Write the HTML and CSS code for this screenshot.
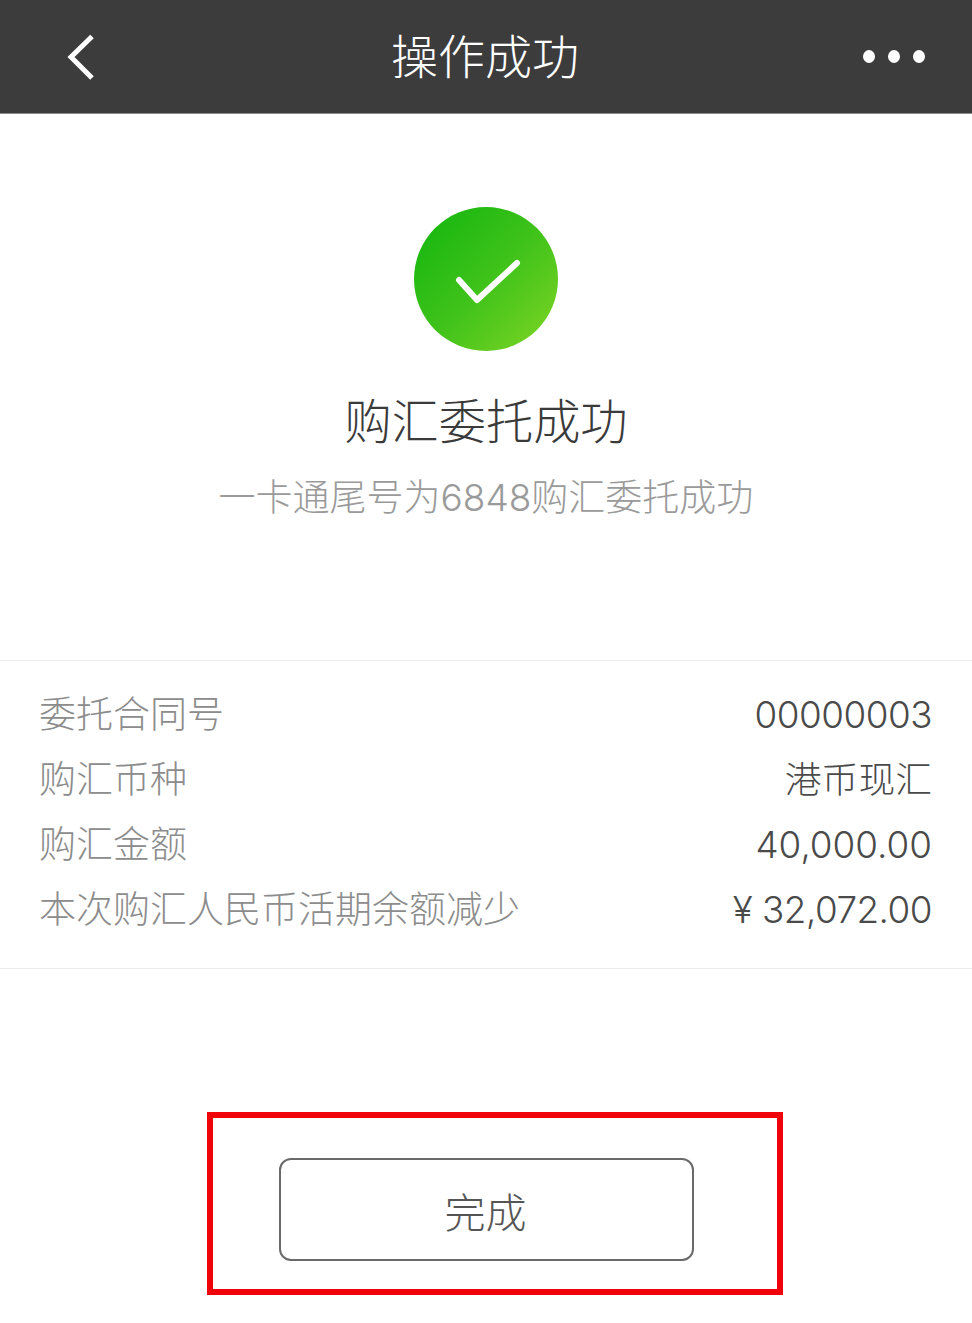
FILE: index.html
```html
<!DOCTYPE html>
<html lang="zh-CN">
<head>
    <meta charset="UTF-8">
    <meta name="viewport" content="width=device-width, initial-scale=1.0">
    <title>操作成功</title>
    <link rel="stylesheet" href="styles.css">
</head>
<body>

    <!-- Top bar -->
    <header class="topbar">
        <svg class="back" width="30" height="48" viewBox="0 0 30 48">
            <path d="M26 3.500 L5 24 L26 45" fill="none" stroke="#fff" stroke-width="5"/>
        </svg>
        <div class="topbar-title">操作成功</div>
        <div class="more"><span></span><span></span><span></span></div>
    </header>

    <!-- Result -->
    <section class="result">
        <div class="result-icon">
            <svg width="144" height="144" viewBox="0 0 144 144">
                <path d="M45 73 L63 93 L103 56" fill="none" stroke="#fff" stroke-width="6" stroke-linecap="round" stroke-linejoin="round"/>
            </svg>
        </div>
        <h1 class="result-title">购汇委托成功</h1>
        <p class="result-desc">一卡通尾号为6848购汇委托成功</p>
    </section>

    <!-- Details -->
    <section class="details">
        <div class="row"><span class="label">委托合同号</span><span class="value num">00000003</span></div>
        <div class="row"><span class="label">购汇币种</span><span class="value">港币现汇</span></div>
        <div class="row"><span class="label">购汇金额</span><span class="value">40,000.00</span></div>
        <div class="row"><span class="label">本次购汇人民币活期余额减少</span><span class="value num">¥ 32,072.00</span></div>
    </section>

    <!-- Button with red marker -->
    <div class="marker">
        <button class="done">完成</button>
    </div>

</body>
</html>
```

FILE: styles.css
```css
html, body {
    margin: 0;
    padding: 0;
}

body {
    width: 972px;
    height: 1323px;
    overflow: hidden;
    background-color: #fff;
    font-family: Inter, "Noto Sans CJK SC", sans-serif;
}

.topbar {
    height: 113px;
    background-color: #3c3c3c;
    border-bottom: 1px solid #8a8a8a;
    display: grid;
    grid-template-columns: 1fr auto 1fr;
    align-items: center;
    padding: 0 47px 0 66px;
}

.topbar-title {
    color: #fff;
    font-size: 47px;
    font-weight: 300;
    line-height: 113px;
    margin-right: 21px;
}

.more {
    display: flex;
    gap: 13px;
    justify-content: flex-end;
}

.more span {
    width: 12px;
    height: 13px;
    border-radius: 50%;
    background-color: #fff;
}

.result {
    height: 546px;
    padding-top: 93px;
    box-sizing: border-box;
    display: flex;
    flex-direction: column;
    align-items: center;
}

.result-icon {
    width: 144px;
    height: 144px;
    border-radius: 50%;
    background: linear-gradient(135deg, #10b50e 0%, #3ec21a 50%, #80d624 100%);
}

.result-title {
    margin: 37px 0 0;
    font-size: 47.200px;
    font-weight: 300;
    line-height: 68px;
    color: #3a3a3a;
}

.result-desc {
    margin: 18px 0 0;
    font-size: 37px;
    font-weight: 300;
    line-height: 48px;
    color: #9a9a9a;
}

.details {
    border-top: 1px solid #ececec;
    border-bottom: 1px solid #ececec;
    padding: 22px 40px 26px 39px;
    height: 309px;
    box-sizing: border-box;
}

.row {
    display: flex;
    justify-content: space-between;
    height: 65px;
    line-height: 64px;
    font-size: 36.800px;
    font-weight: 300;
}

.label {
    font-size: 37px;
    color: #8c8c8c;
}

.value {
    color: #4a4a4a;
}

.num {
    letter-spacing: -0.500px;
}

.marker {
    width: 576px;
    height: 183px;
    margin: 143px 0 0 207px;
    border: 6px solid #f00309;
    box-sizing: border-box;
    display: flex;
    justify-content: center;
    padding-top: 40px;
}

.done {
    width: 415px;
    height: 103px;
    margin-right: 17px;
    background: #fff;
    border: 2px solid #6a6a6a;
    border-radius: 12px;
    color: #555;
    font-family: inherit;
    font-size: 41px;
    font-weight: 300;
    padding: 0 2px 0 0;
}
```
